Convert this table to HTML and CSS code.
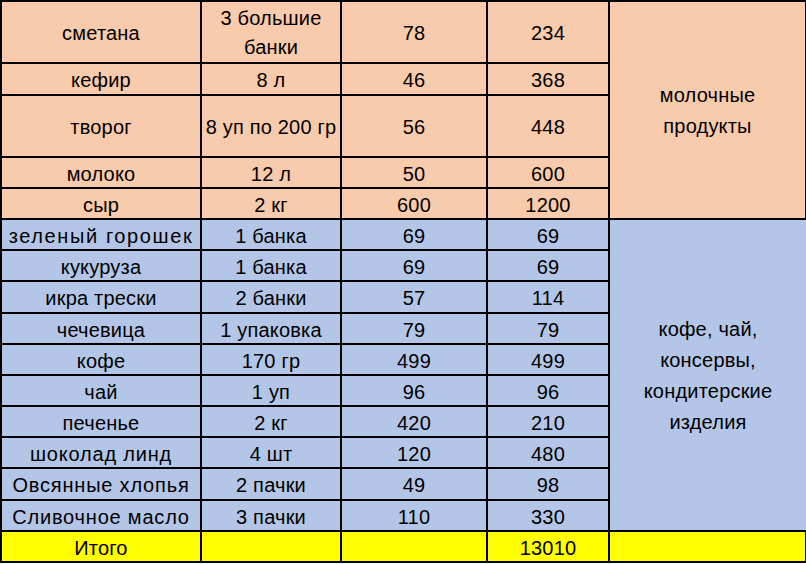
FILE: index.html
```html
<!DOCTYPE html>
<html lang="ru">
<head>
<meta charset="utf-8">
<link rel="stylesheet" href="styles.css">
</head>
<body>
<table class="sheet">
  <colgroup>
    <col class="c1"><col class="c2"><col class="c3"><col class="c4"><col class="c5">
  </colgroup>
  <tbody>
    <tr class="dairy h62"><td>сметана</td><td class="wrap">3 большие<br>банки</td><td>78</td><td>234</td><td rowspan="5" class="group">молочные<br>продукты</td></tr>
    <tr class="dairy h32"><td>кефир</td><td>8 л</td><td>46</td><td>368</td></tr>
    <tr class="dairy h62"><td>творог</td><td>8 уп по 200 гр</td><td>56</td><td>448</td></tr>
    <tr class="dairy h31"><td>молоко</td><td>12 л</td><td>50</td><td>600</td></tr>
    <tr class="dairy h31"><td>сыр</td><td>2 кг</td><td>600</td><td>1200</td></tr>
    <tr class="misc h31"><td class="wider">зеленый горошек</td><td>1 банка</td><td>69</td><td>69</td><td rowspan="10" class="group open">кофе, чай,<br>консервы,<br>кондитерские<br>изделия</td></tr>
    <tr class="misc h31"><td>кукуруза</td><td>1 банка</td><td>69</td><td>69</td></tr>
    <tr class="misc h32"><td>икра трески</td><td>2 банки</td><td>57</td><td>114</td></tr>
    <tr class="misc h31"><td>чечевица</td><td>1 упаковка</td><td>79</td><td>79</td></tr>
    <tr class="misc h31"><td>кофе</td><td>170 гр</td><td>499</td><td>499</td></tr>
    <tr class="misc h31"><td>чай</td><td>1 уп</td><td>96</td><td>96</td></tr>
    <tr class="misc h31"><td>печенье</td><td>2 кг</td><td>420</td><td>210</td></tr>
    <tr class="misc h31"><td class="wide">шоколад линд</td><td>4 шт</td><td>120</td><td>480</td></tr>
    <tr class="misc h32"><td class="wide">Овсянные хлопья</td><td>2 пачки</td><td>49</td><td>98</td></tr>
    <tr class="misc h31"><td class="wide">Сливочное масло</td><td>3 пачки</td><td>110</td><td>330</td></tr>
    <tr class="total h31"><td>Итого</td><td></td><td></td><td>13010</td><td></td></tr>
  </tbody>
</table>
</body>
</html>
```

FILE: styles.css
```css
html, body {
  margin: 0;
  padding: 0;
  background: #ffffff;
}

.sheet {
  border-collapse: collapse;
  table-layout: fixed;
  width: 805px;
  font-family: "Liberation Sans", Arial, sans-serif;
  font-size: 20px;
  color: #000000;
}

.c1 { width: 200px; }
.c2 { width: 140px; }
.c3 { width: 146px; }
.c4 { width: 122px; }
.c5 { width: 197px; }

.sheet td {
  border: 2px solid #000000;
  padding: 2px 0 0 0;
  text-align: center;
  vertical-align: middle;
  white-space: nowrap;
  line-height: 24px;
  overflow: hidden;
  letter-spacing: 0.2px;
}

.sheet td.wide { letter-spacing: 0.8px; }
.sheet td.wider { letter-spacing: 1.6px; }

.h62 td { height: 58px; }
.h32 td { height: 28px; }
.h31 td { height: 27px; }

.sheet td.wrap { line-height: 29px; }

.sheet td.group {
  line-height: 31px;
  height: auto;
}

.sheet td.open { border-right: none; }

.dairy td { background: #f8cbad; }
.misc td { background: #b4c6e7; }
.total td { background: #ffff00; }
```
